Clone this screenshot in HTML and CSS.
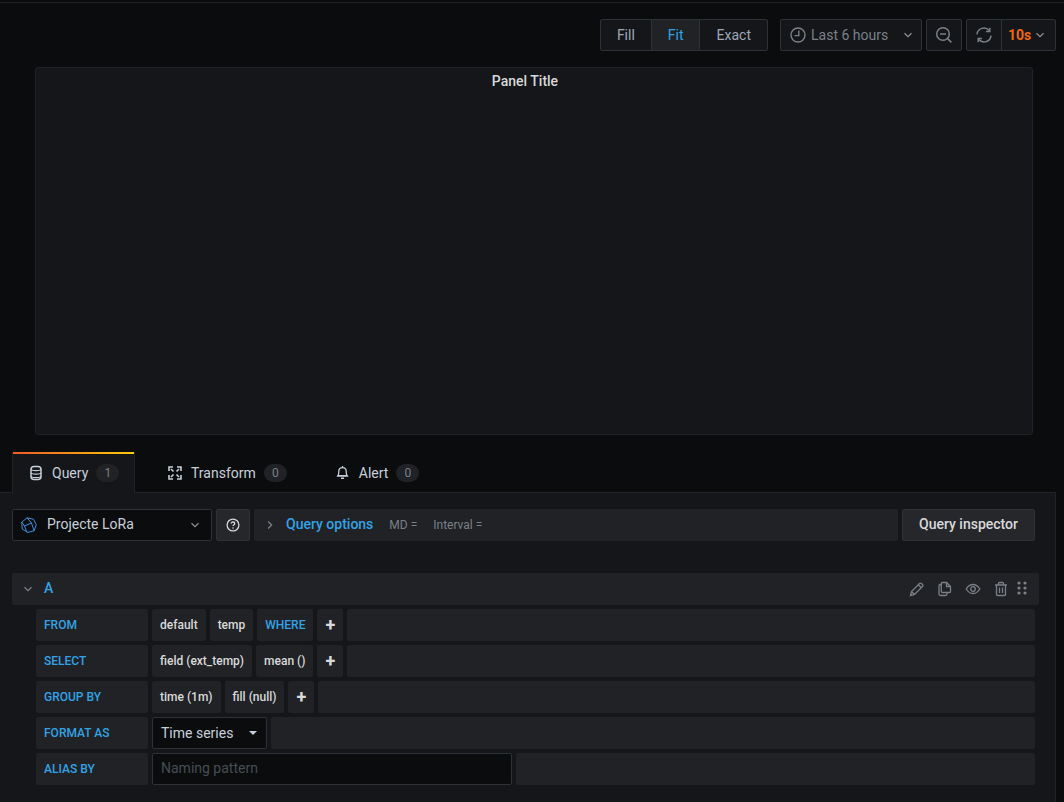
FILE: index.html
```html
<!DOCTYPE html>
<html>
<head>
<meta charset="utf-8">
<title>Panel editor</title>
<link rel="stylesheet" href="styles.css">
</head>
<body>
<div class="topline"></div>
<div class="toolbar">
  <div class="group">
    <span class="seg">Fill</span><span class="seg seg-active">Fit</span><span class="seg">Exact</span>
  </div>
  <div class="group group-time">
    <span class="seg seg-time">
      <svg class="ic" viewBox="0 0 16 16" width="16" height="16"><circle cx="8" cy="8" r="7" fill="none" stroke="currentColor" stroke-width="1.400"/><path d="M8.800 3.600V8.600H4.600" fill="none" stroke="currentColor" stroke-width="1.400"/></svg>
      <span>Last 6 hours</span>
      <svg class="chev" viewBox="0 0 10 6" width="10" height="6"><path d="M1.500 1.200L5 4.600l3.500-3.400" fill="none" stroke="currentColor" stroke-width="1.300"/></svg>
    </span>
  </div>
  <div class="group group-zoom">
    <span class="seg seg-icon">
      <svg viewBox="0 0 18 18" width="18" height="18"><circle cx="8" cy="8" r="6.300" fill="none" stroke="currentColor" stroke-width="1.500"/><path d="M5 8h6M12.600 12.600L16.400 16.400" fill="none" stroke="currentColor" stroke-width="1.500"/></svg>
    </span>
  </div>
  <div class="group">
    <span class="seg seg-icon seg-refresh">
      <svg viewBox="0 0 16 16" width="16" height="16"><path d="M1 7.400A7 7 0 0 1 13.200 3.400M15 8.600A7 7 0 0 1 2.800 12.600" fill="none" stroke="currentColor" stroke-width="1.500"/><path d="M13.800 .8V4.600H10M2.200 15.200V11.400H6" fill="none" stroke="currentColor" stroke-width="1.500"/></svg>
    </span><span class="seg seg-interval"><b>10s</b><svg class="chev" viewBox="0 0 10 6" width="10" height="6"><path d="M1.500 1.200L5 4.600l3.500-3.400" fill="none" stroke="currentColor" stroke-width="1.300"/></svg></span>
  </div>
</div>

<div class="panel"><div class="panel-title">Panel Title</div></div>

<div class="tabs">
  <div class="tab tab-active">
    <svg class="tab-ic" viewBox="0 0 14 16" width="14" height="16"><rect x="2" y="1.500" width="10" height="13" rx="3" fill="none" stroke="currentColor" stroke-width="1.500"/><path d="M2 4.500C3 6 11 6 12 4.500M2 8C3 9.500 11 9.500 12 8M2 11.500C3 13 11 13 12 11.500" fill="none" stroke="currentColor" stroke-width="1.300"/></svg>
    <span>Query</span><span class="badge">1</span>
  </div>
  <div class="tab tab-transform">
    <svg class="tab-ic" viewBox="0 0 14 14" width="14" height="14"><path d="M1 5V1h4M9 1h4v4M13 9v4H9M5 13H1V9" fill="none" stroke="currentColor" stroke-width="1.600"/><path d="M3 3l2.500 2.500M11 3L8.500 5.500M3 11l2.500-2.500M11 11L8.500 8.500" fill="none" stroke="currentColor" stroke-width="1.600"/></svg>
    <span>Transform</span><span class="badge">0</span>
  </div>
  <div class="tab tab-alert">
    <svg class="tab-ic" viewBox="0 0 14 16" width="13" height="15"><path d="M2 11.500c1-1 1-2 1-4.500 0-2.400 1.700-4.200 4-4.200s4 1.800 4 4.200c0 2.500 0 3.500 1 4.500zM1 11.800h12M5.300 14.200h3.400M7 1v1.800" fill="none" stroke="currentColor" stroke-width="1.400"/></svg>
    <span>Alert</span><span class="badge">0</span>
  </div>
</div>

<div class="editor">
  <div class="ds-row">
    <div class="ds-picker">
      <svg class="ds-logo" viewBox="0 0 16 16" width="16" height="16"><path d="M6 .8l6.500 1.400 2.800 5.600-2.200 6-6.300 1.600-5.600-3.400L.8 5.200zM6 .8l4.500 5.200-7 3 2.500 6.400M10.500 6l2.600 7.800M3.500 9L.8 5.200" fill="none" stroke="#3d8fe0" stroke-width="1"/></svg>
      <span class="ds-name">Projecte LoRa</span>
      <svg class="chev" viewBox="0 0 10 6" width="10" height="6"><path d="M1.500 1.200L5 4.600l3.500-3.400" fill="none" stroke="currentColor" stroke-width="1.300"/></svg>
    </div>
    <div class="help">
      <svg viewBox="0 0 14 14" width="14" height="14"><circle cx="7" cy="7" r="5.900" fill="none" stroke="currentColor" stroke-width="1.300"/><path d="M5.200 5.600C5.200 4.600 6 4 7 4s1.800.6 1.800 1.500C8.800 6.700 7 6.700 7 8" fill="none" stroke="currentColor" stroke-width="1.300"/><circle cx="7" cy="10" r=".8" fill="currentColor"/></svg>
    </div>
    <div class="options">
      <svg class="opt-chev" viewBox="0 0 6 10" width="6" height="10"><path d="M1.200 1.500L4.600 5 1.200 8.500" fill="none" stroke="currentColor" stroke-width="1.300"/></svg>
      <span class="opt-title">Query options</span>
      <span class="opt-meta">MD =</span>
      <span class="opt-meta">Interval =</span>
    </div>
    <div class="inspector">Query inspector</div>
  </div>

  <div class="q-header">
    <svg class="q-chev" viewBox="0 0 10 6" width="10" height="6"><path d="M1.500 1.200L5 4.600l3.500-3.400" fill="none" stroke="currentColor" stroke-width="1.300"/></svg>
    <span class="q-name">A</span>
    <div class="q-actions">
      <svg viewBox="0 0 16 16" width="16" height="16"><path d="M1.500 14.500l1-4L10.500 2.500a1.400 1.400 0 0 1 2 0l1 1a1.400 1.400 0 0 1 0 2L5.500 13.500zM2.500 10.500l3 3M9.300 3.700l3 3" fill="none" stroke="currentColor" stroke-width="1.300"/></svg>
      <svg viewBox="0 0 16 16" width="16" height="16"><path d="M4 3.500H3.500A1.500 1.500 0 0 0 2 5v8a1.500 1.500 0 0 0 1.500 1.500h5A1.500 1.500 0 0 0 10 13v-1M5.500 1.500h4L13.500 5.500v5a1 1 0 0 1-1 1h-7a1.200 1.200 0 0 1-1.200-1.200V2.500a1 1 0 0 1 1-1zM9.500 1.500V5.500h4" fill="none" stroke="currentColor" stroke-width="1.300"/></svg>
      <svg viewBox="0 0 16 16" width="16" height="16"><path d="M1.200 8C3 5 5.300 3.500 8 3.500S13 5 14.800 8C13 11 10.700 12.500 8 12.500S3 11 1.200 8z" fill="none" stroke="currentColor" stroke-width="1.300"/><circle cx="8" cy="8" r="2.300" fill="none" stroke="currentColor" stroke-width="1.300"/></svg>
      <svg viewBox="0 0 16 16" width="16" height="16"><path d="M2 4h12M5.500 4V2.500a1 1 0 0 1 1-1h3a1 1 0 0 1 1 1V4M3.500 4v9.500a1 1 0 0 0 1 1h7a1 1 0 0 0 1-1V4M6.500 6.500v5.500M9.500 6.500v5.500" fill="none" stroke="currentColor" stroke-width="1.300"/></svg>
      <svg class="drag" viewBox="0 0 10 14" width="10" height="14"><g fill="currentColor"><circle cx="2" cy="2" r="1.600"/><circle cx="8" cy="2" r="1.600"/><circle cx="2" cy="7" r="1.600"/><circle cx="8" cy="7" r="1.600"/><circle cx="2" cy="12" r="1.600"/><circle cx="8" cy="12" r="1.600"/></g></svg>
    </div>
  </div>

  <div class="rows">
    <div class="row">
      <div class="cell label">FROM</div>
      <div class="cell">default</div>
      <div class="cell">temp</div>
      <div class="cell kw">WHERE</div>
      <div class="cell plus">+</div>
      <div class="cell fill"></div>
    </div>
    <div class="row">
      <div class="cell label">SELECT</div>
      <div class="cell">field (ext_temp)</div>
      <div class="cell">mean ()</div>
      <div class="cell plus">+</div>
      <div class="cell fill"></div>
    </div>
    <div class="row">
      <div class="cell label">GROUP BY</div>
      <div class="cell">time (1m)</div>
      <div class="cell">fill (null)</div>
      <div class="cell plus">+</div>
      <div class="cell fill"></div>
    </div>
    <div class="row">
      <div class="cell label">FORMAT AS</div>
      <div class="select">Time series<span class="caret"></span></div>
      <div class="cell fill"></div>
    </div>
    <div class="row">
      <div class="cell label">ALIAS BY</div>
      <div class="alias">Naming pattern</div>
      <div class="cell fill"></div>
    </div>
  </div>
</div>
</body>
</html>
```
FILE: styles.css
```css
* { box-sizing: border-box; }
html, body { margin: 0; padding: 0; height: 802px; overflow: hidden; }
body { background: #0b0c0e; color: #c7d0d9; font-family: Roboto, "Liberation Sans", sans-serif; font-size: 14px; }

.topline { height: 3px; border-bottom: 1px solid #202226; }

.toolbar { display: flex; justify-content: flex-end; padding: 16px 8px 0 0; height: 64px; }
.group { display: flex; height: 32px; }
.group-time { margin-left: 12px; }
.group-zoom { margin-left: 4px; margin-right: 4px; }
.seg { display: flex; align-items: center; height: 32px; background: #141619; border: 1px solid #2c3235; color: #9fa7b3; padding: 0 16px; margin-left: -1px; }
.group .seg:first-child { margin-left: 0; border-radius: 2px 0 0 2px; }
.group .seg:last-child { border-radius: 0 2px 2px 0; }
.group .seg:only-child { border-radius: 2px; }
.seg-active { background: #202226; color: #33a2e5; padding-right: 15px; }
.seg-active + .seg { padding-left: 17px; }
.seg-time { width: 142px; padding: 0 8px 0 9px; color: #7b8087; }
.seg-time span { margin-left: 5px; flex: 1; }
.seg-icon { width: 36px; padding: 0; justify-content: center; color: #7b8087; }
.seg-refresh { color: #7b8087; }
.seg-interval { padding: 0 10px 0 6px; width: 55px; color: #8e8e8e; justify-content: space-between; }
.seg-interval b { color: #f2660f; font-weight: 700; }
.chev { display: block; color: #8e8e8e; }

.panel { margin: 0 31px 0 35px; height: 368px; background: #141619; border: 1px solid #202226; border-radius: 3px; }
.panel-title { text-align: center; font-weight: 500; color: #d8d9da; line-height: 26px; padding-right: 18px; }

.tabs { display: flex; height: 41px; margin-top: 17px; padding-left: 12px; width: 1056px; border-bottom: 1px solid #202226; }
.tab { display: flex; align-items: center; height: 41px; color: #c7d0d9; }
.tab-ic { display: block; margin-right: 9px; color: #c7d0d9; }
.tab-active { width: 123px; padding-left: 16px; background: #141619; border: 1px solid #202226; border-top: 0; border-bottom: 0; position: relative; }
.tab-active::before { content: ""; position: absolute; left: 0; right: 0; top: 0; height: 2px; background: linear-gradient(90deg, #f05a28, #fbca0a); }
.tab-transform { margin-left: 33px; }
.tab-alert { margin-left: 49px; }
.tab-alert .tab-ic { margin-right: 10px; }
.badge { display: inline-flex; align-items: center; justify-content: center; width: 23px; height: 18px; margin-left: 8px; border-radius: 9px; background: #202226; color: #7b8087; font-size: 12px; }

.editor { width: 1056px; height: 310px; background: #141619; border-right: 1px solid #202226; padding: 16px 0 0 12px; }
.ds-row { display: flex; height: 32px; gap: 4px; }
.ds-picker { display: flex; align-items: center; width: 200px; background: #0b0c0e; border: 1px solid #2c3235; border-radius: 2px; padding: 0 11px 2px 8px; }
.ds-logo { margin-right: 10px; margin-top: 2px; }
.ds-name { flex: 1; color: #c7d0d9; }
.ds-picker .chev { margin-top: 2px; }
.help { display: flex; align-items: center; justify-content: center; width: 34px; background: #25272b; border: 1px solid #2c3235; border-radius: 2px; color: #d8d9da; }
.options { display: flex; align-items: center; width: 644px; background: #202226; border-radius: 2px; padding: 0 0 2px 13px; }
.opt-chev { color: #7b8087; margin-right: 13px; margin-top: 2px; }
.opt-title { color: #33a2e5; font-weight: 500; margin-right: 16px; }
.opt-meta { color: #7b8087; font-size: 12px; margin-right: 16px; margin-top: 2px; }
.inspector { display: flex; align-items: center; justify-content: center; width: 133px; padding-bottom: 2px; background: #25272b; border: 1px solid #2c3235; border-radius: 2px; color: #d8d9da; font-weight: 500; }

.q-header { display: flex; align-items: center; width: 1027px; height: 32px; margin-top: 32px; background: #202226; border-radius: 2px; padding-left: 11px; }
.q-chev { color: #7b8087; margin-right: 11px; }
.q-name { color: #33a2e5; font-weight: 500; padding-bottom: 2px; }
.q-actions { display: flex; align-items: center; gap: 12px; margin-left: auto; padding-right: 12px; color: #7b8087; }
.drag { margin-left: -4px; margin-top: -3px; }

.rows { display: flex; flex-direction: column; gap: 4px; width: 999px; margin: 4px 0 0 24px; }
.row { display: flex; gap: 4px; height: 32px; }
.cell { display: flex; align-items: center; padding: 0 8px; background: #202226; border-radius: 2px; color: #d8d9da; font-size: 12px; font-weight: 500; white-space: nowrap; }
.label { width: 112px; color: #33a2e5; }
.kw { color: #33a2e5; }
.plus { font-size: 18px; font-weight: 700; color: #d8d9da; padding-bottom: 2px; }
.fill { flex: 1; }
.select { display: flex; align-items: center; width: 115px; padding: 0 8px; background: #0b0c0e; border: 1px solid #2c3235; border-radius: 2px; color: #c7d0d9; }
.caret { margin-left: auto; margin-right: 1px; width: 0; height: 0; border-left: 4px solid transparent; border-right: 4px solid transparent; border-top: 4px solid #c7d0d9; }
.alias { display: flex; align-items: center; width: 360px; padding: 0 8px 2px; background: #0b0c0e; border: 1px solid #2c3235; border-radius: 2px; color: #464c54; }
```
